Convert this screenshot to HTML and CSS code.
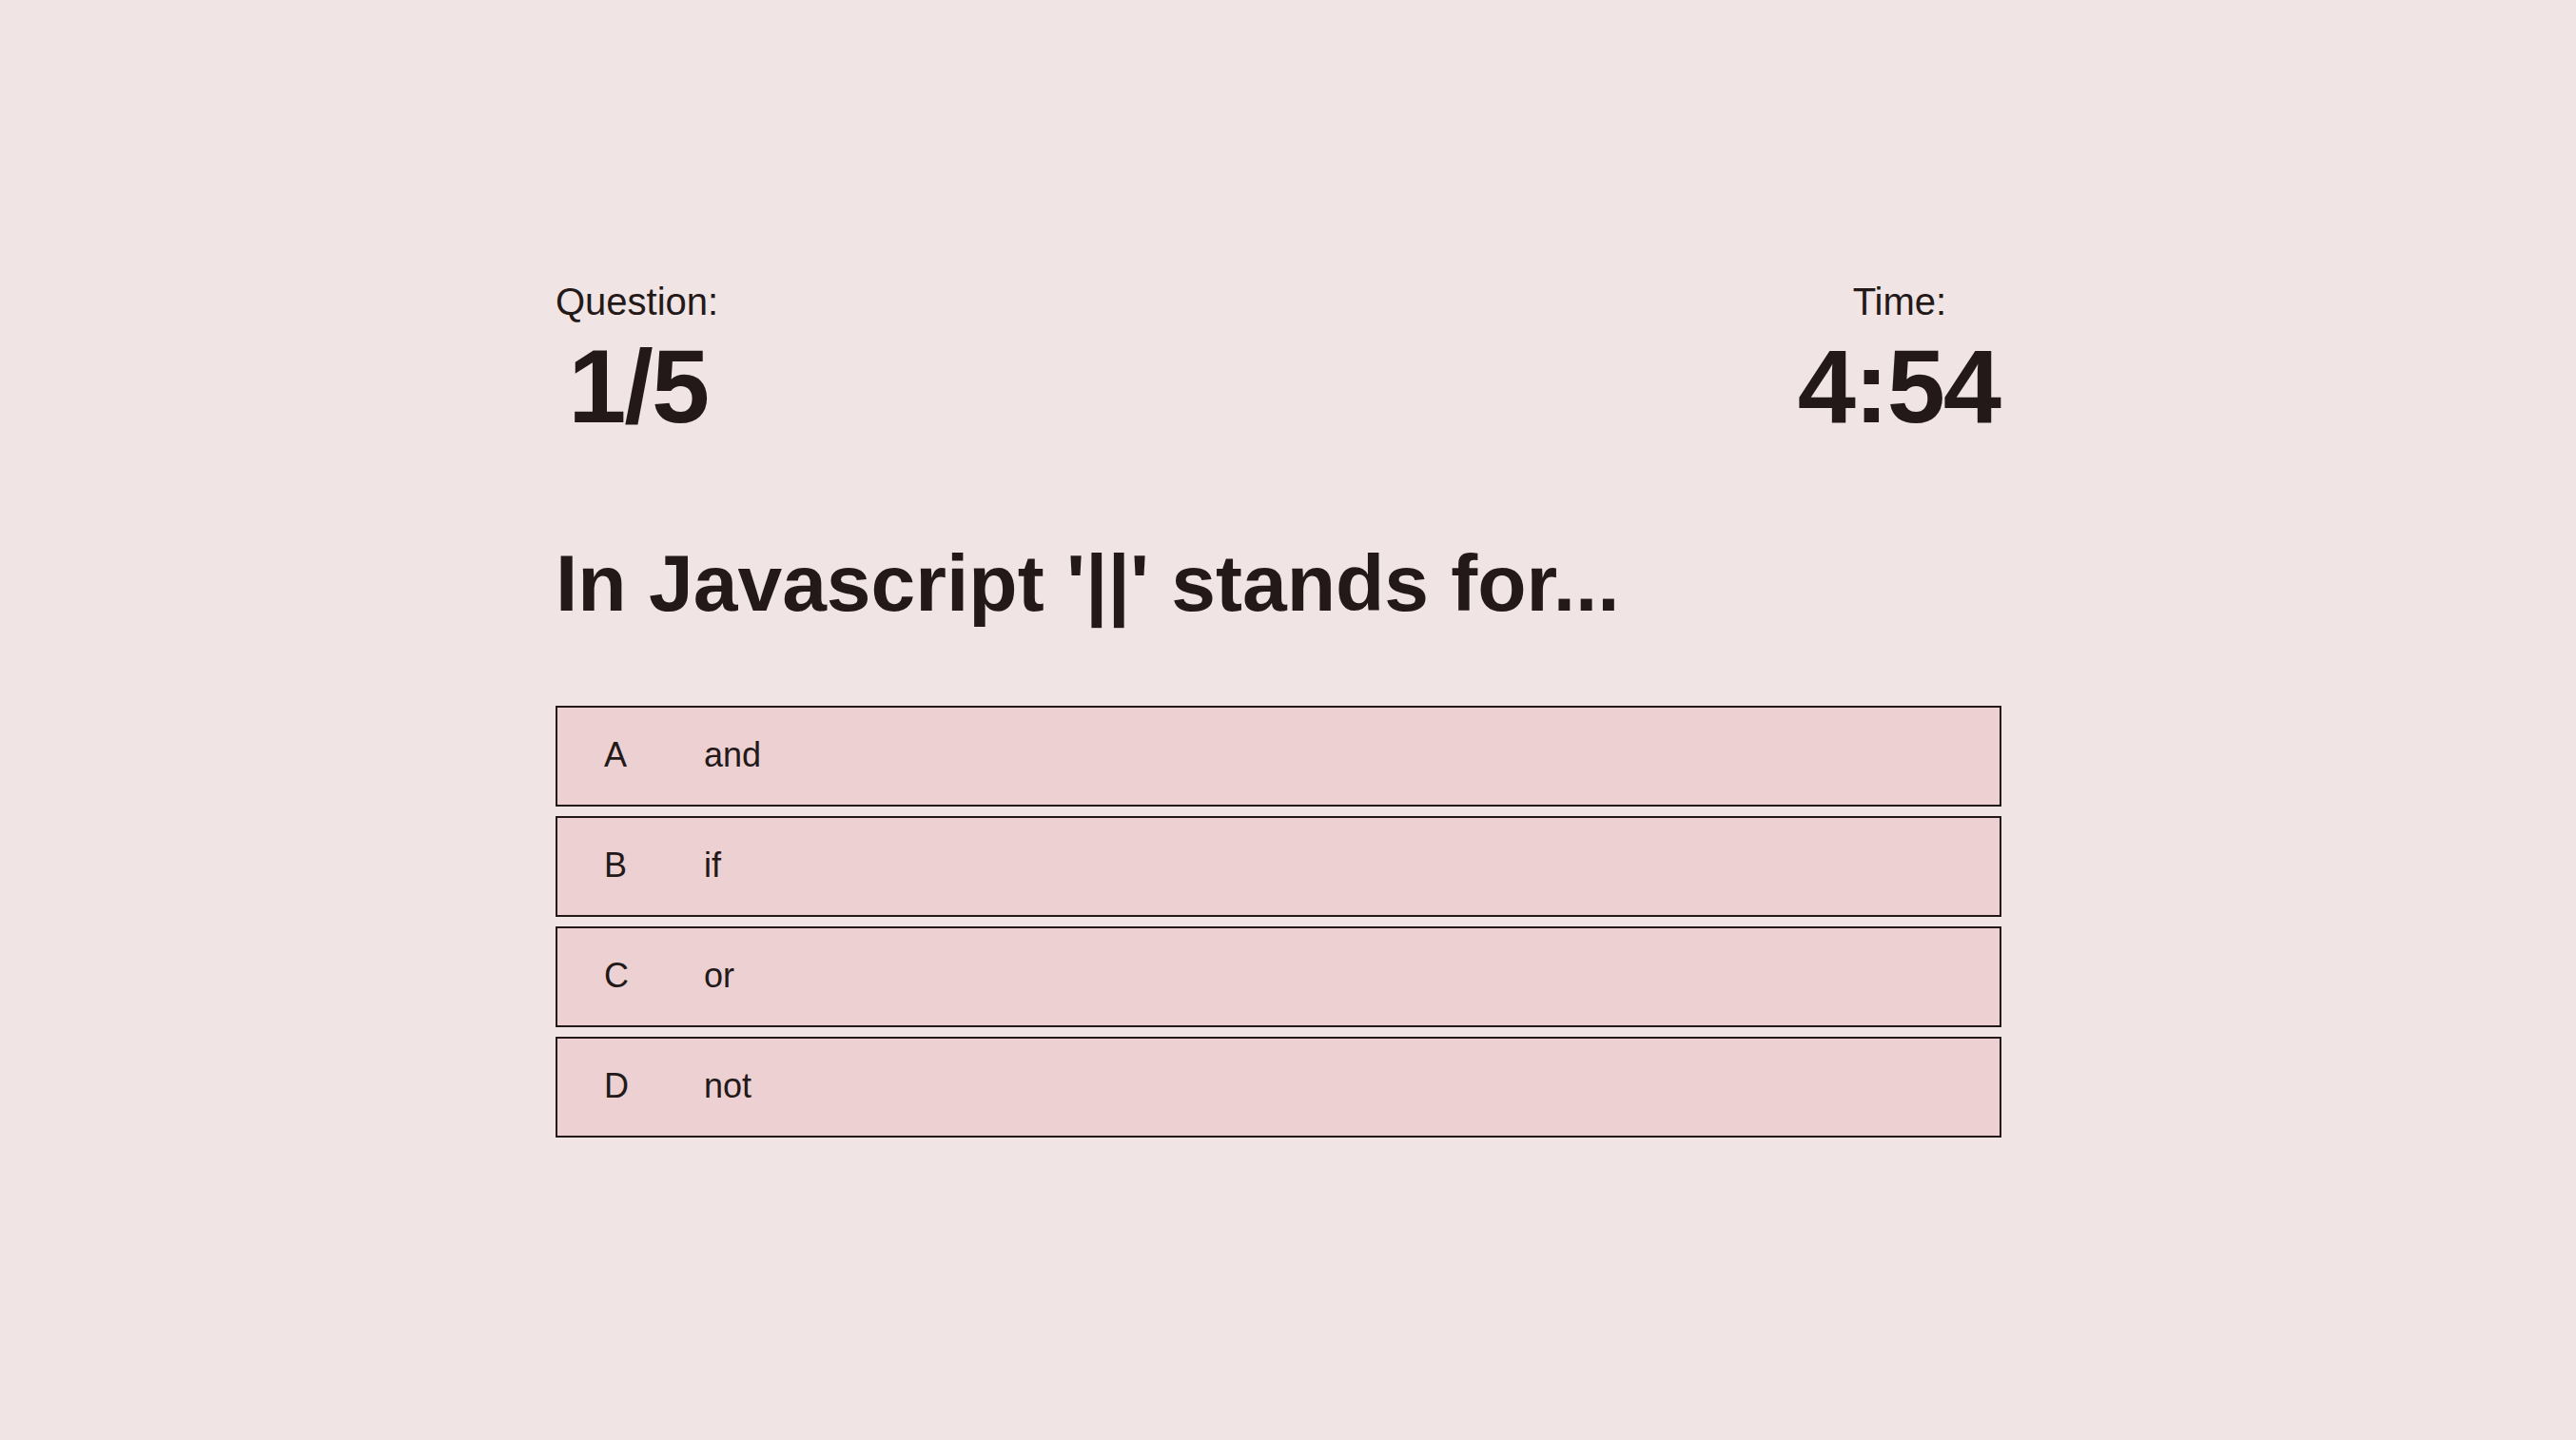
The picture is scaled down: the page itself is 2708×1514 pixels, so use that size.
FILE: index.html
```html
<!DOCTYPE html>
<html lang="en">
<head>
<meta charset="utf-8">
<title>Quiz</title>
<link rel="stylesheet" href="styles.css">
</head>
<body>
<main class="quiz">
  <header class="quiz-header">
    <div class="stat">
      <div class="stat-label">Question:</div>
      <div class="stat-value">1/5</div>
    </div>
    <div class="stat stat-right">
      <div class="stat-label">Time:</div>
      <div class="stat-value">4:54</div>
    </div>
  </header>
  <h1 class="question">In Javascript '||' stands for...</h1>
  <ul class="options">
    <li class="option"><span class="letter">A</span><span class="answer">and</span></li>
    <li class="option"><span class="letter">B</span><span class="answer">if</span></li>
    <li class="option"><span class="letter">C</span><span class="answer">or</span></li>
    <li class="option"><span class="letter">D</span><span class="answer">not</span></li>
  </ul>
</main>
</body>
</html>
```
FILE: styles.css
```css
html, body {
  margin: 0;
  padding: 0;
}
body {
  background: #f0e4e4;
  color: #231919;
  font-family: "Liberation Sans", Arial, sans-serif;
  width: 2708px;
  height: 1514px;
  overflow: hidden;
}
.quiz {
  width: 1520px;
  margin-left: 584px;
  padding-top: 295px;
}
.quiz-header {
  display: flex;
  justify-content: space-between;
  align-items: flex-start;
}
.stat {
  text-align: center;
}
.stat-label {
  font-size: 40px;
}
.stat-value {
  font-size: 110px;
  font-weight: 700;
  letter-spacing: -2px;
  padding-left: 2px;
  margin-top: 2px;
}
.stat-right .stat-value {
  padding-left: 0;
  padding-right: 2px;
}
.question {
  font-size: 84px;
  font-weight: 700;
  margin: 96px 0 80px;
}
.options {
  list-style: none;
  margin: 0;
  padding: 0;
  display: flex;
  flex-direction: column;
  gap: 10px;
}
.option {
  box-sizing: border-box;
  height: 106px;
  border: 2px solid #231919;
  background: #edd0d2;
  display: flex;
  align-items: center;
  padding-left: 49px;
  padding-bottom: 2px;
  font-size: 36px;
}
.letter {
  width: 105px;
  flex: none;
}
```
